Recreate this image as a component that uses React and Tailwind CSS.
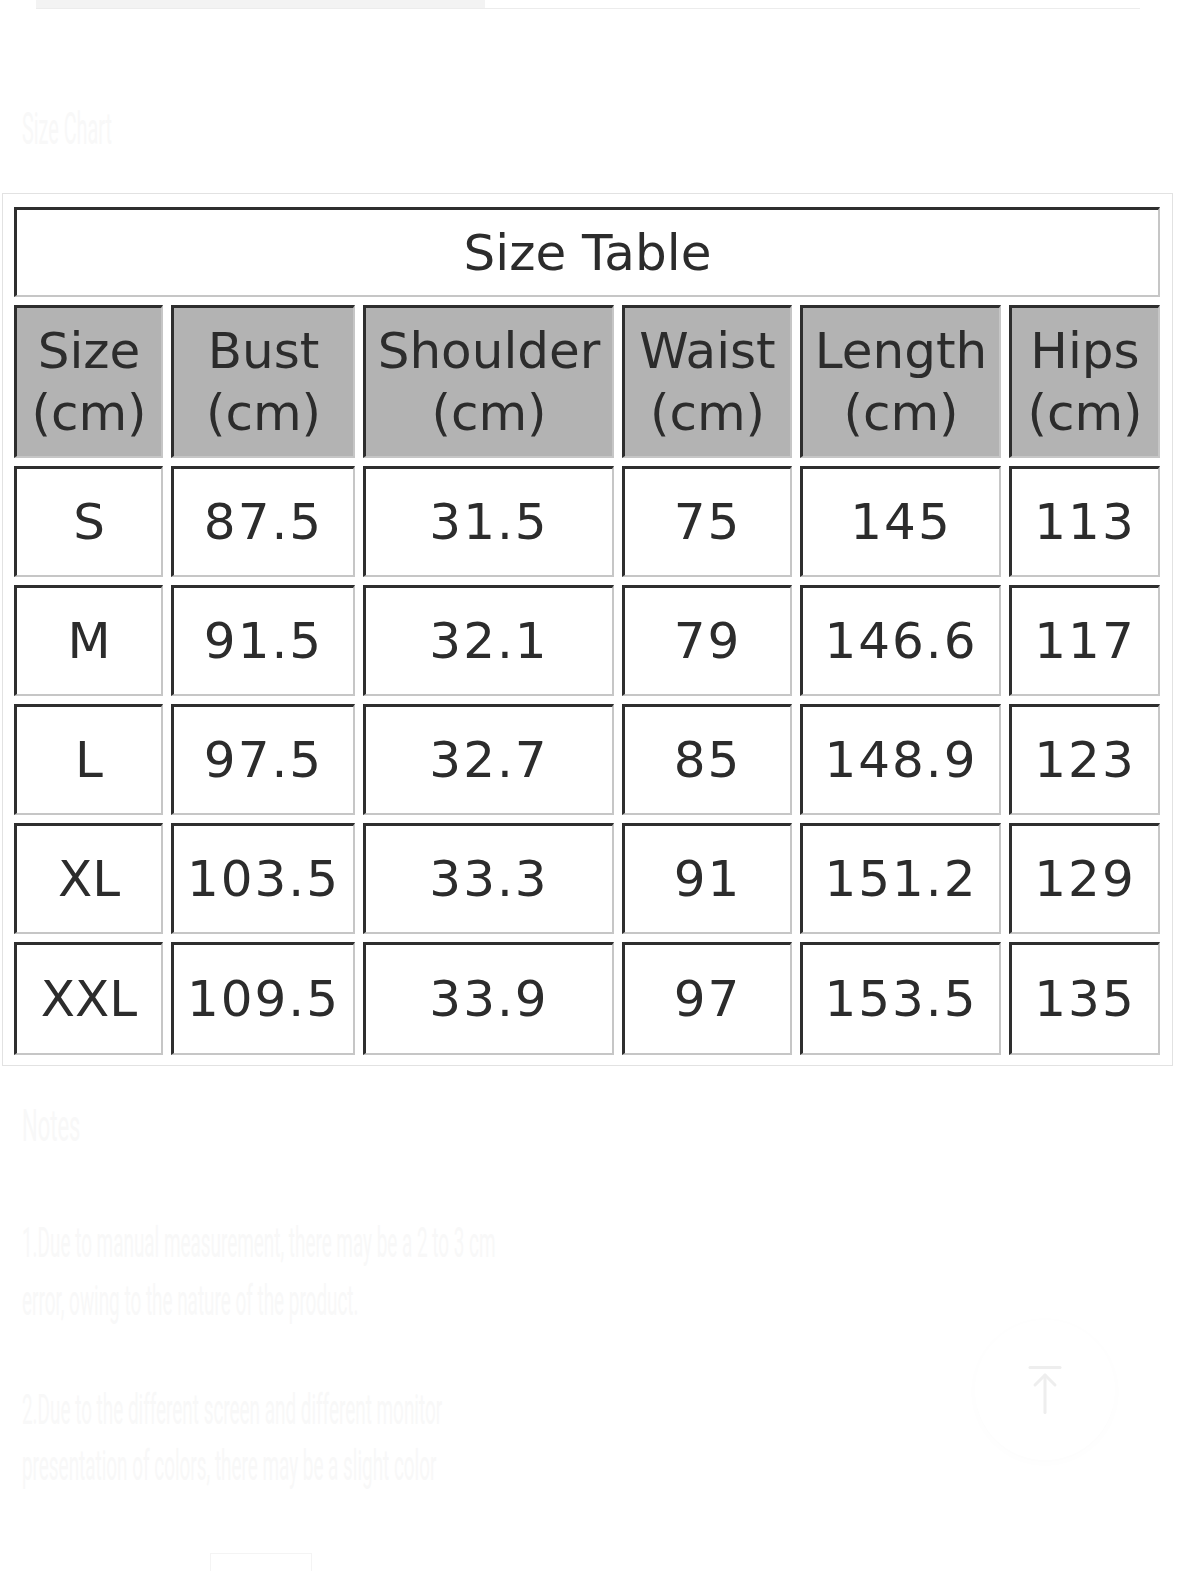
import React from "react";

const cols = ["Size", "Bust", "Shoulder", "Waist", "Length", "Hips"];
const rows = [
  ["S", "87.5", "31.5", "75", "145", "113"],
  ["M", "91.5", "32.1", "79", "146.6", "117"],
  ["L", "97.5", "32.7", "85", "148.9", "123"],
  ["XL", "103.5", "33.3", "91", "151.2", "129"],
  ["XXL", "109.5", "33.9", "97", "153.5", "135"],
];

const cellBase =
  "flex items-center justify-center text-center border-t-[3px] border-l-[3px] border-r-2 border-b-2 border-t-[#2e2e2e] border-l-[#2e2e2e] border-r-[#c6c6c6] border-b-[#c6c6c6]";

export default function App() {
  return (
    <div
      className="relative w-[1178px] min-h-[1571px] bg-white overflow-hidden"
      style={{ fontFamily: '"DejaVu Sans", Verdana, sans-serif' }}
    >
      {/* top progress bar */}
      <div className="ml-[36px] w-[1104px] h-[9px] flex border-b border-[#ececec]">
        <div className="w-[449px] h-full bg-[#f3f3f3]" />
      </div>

      {/* faint heading */}
      <div className="h-[184px] pl-[22px] pt-[96px]">
        <div
          className="text-[44px] leading-[48px] text-[#f8f8f8] origin-left scale-x-[0.45] whitespace-nowrap"
          style={{ fontFamily: "Roboto, sans-serif" }}
        >
          Size Chart
        </div>
      </div>

      {/* size table image */}
      <div className="ml-[2px] w-[1171px] border border-[#e2e2e2] pt-[13px] px-[11px] pb-[10px] bg-white">
        <div className="grid grid-cols-[149px_184px_251px_170px_201px_151px] gap-x-2 gap-y-2 text-[#2c2c2c] text-[50px]">
          <div className={`${cellBase} col-span-6 h-[90px] bg-white leading-none`}>
            Size Table
          </div>
          {cols.map((c) => (
            <div key={c} className={`${cellBase} h-[153px] bg-[#b3b3b3] flex-col leading-[62px]`}>
              <span>{c}</span>
              <span>(cm)</span>
            </div>
          ))}
          {rows.map((r, ri) =>
            r.map((v, i) => (
              <div
                key={r[0] + i}
                className={`${cellBase} ${ri === 4 ? "h-[113px]" : "h-[111px]"} bg-white leading-none ${i === 0 ? "" : "tracking-[2px]"}`}
              >
                {v}
              </div>
            ))
          )}
        </div>
      </div>

      {/* faint notes */}
      <div
        className="pl-[22px] pt-[36px] text-[#f8f8f8] whitespace-nowrap"
        style={{ fontFamily: "Roboto, sans-serif" }}
      >
        <div className="text-[44px] leading-[48px] origin-left scale-x-[0.5]">Notes</div>
        <div className="mt-[64px] text-[42px] leading-[58px] origin-left scale-x-[0.45]">
          <div>1.Due to manual measurement, there may be a 2 to 3 cm</div>
          <div>error, owing to the nature of the product.</div>
        </div>
        <div className="mt-[52px] text-[42px] leading-[56px] origin-left scale-x-[0.45]">
          <div>2.Due to the different screen and different monitor</div>
          <div>presentation of colors, there may be a slight color</div>
        </div>
      </div>

      {/* back to top button */}
      <div className="absolute left-[975px] top-[1320px] w-[140px] h-[140px] rounded-full bg-white shadow-[0_2px_12px_rgba(0,0,0,0.015)] flex items-center justify-center">
        <svg width="60" height="60" viewBox="0 0 24 24" fill="none" stroke="#eeeeee" strokeWidth="1.2" strokeLinecap="round" strokeLinejoin="round">
          <path d="M6 3h12" />
          <path d="M12 6v15" />
          <path d="M8 10l4-4 4 4" />
        </svg>
      </div>

      {/* faint bottom box */}
      <div className="absolute left-[210px] top-[1553px] w-[102px] h-[30px] border border-[#f4f4f4]" />
    </div>
  );
}
